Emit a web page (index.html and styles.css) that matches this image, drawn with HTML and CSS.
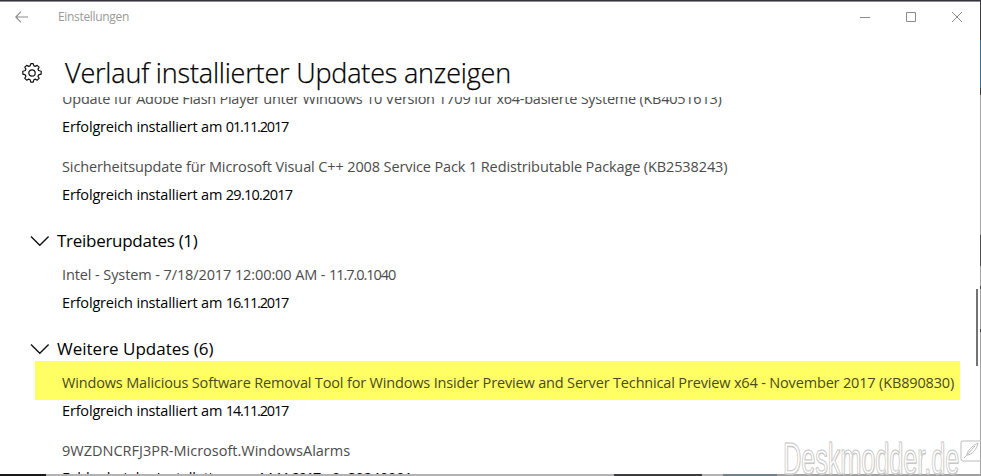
FILE: index.html
```
<!DOCTYPE html>
<html lang="de">
<head>
<meta charset="utf-8">
<title>Einstellungen</title>
<link rel="stylesheet" href="styles.css">
</head>
<body>
<div class="window">
  <header class="titlebar">
    <svg class="back" width="14" height="12" viewBox="0 0 14 12"><path d="M6 .7.8 6 6 11.3M1 6h12"/></svg>
    <span class="app-name">Einstellungen</span>
    <div class="controls">
      <svg width="12" height="12" viewBox="0 0 12 12"><path d="M1 6.5h10"/></svg>
      <svg width="12" height="12" viewBox="0 0 12 12"><path d="M1.5 1.5h9v9h-9z"/></svg>
      <svg width="12" height="12" viewBox="0 0 12 12"><path d="m1 1 10 10M11 1 1 11"/></svg>
    </div>
  </header>
  <div class="heading">
    <svg class="gear" width="20" height="20" viewBox="0 0 20 20"><path d="M8.1 2.9 8.8.7h2.4l.7 2.2 1.3.5 2-1 1.9 1.7-1.1 2 .6 1.4 2.6.8v2.9l-2.6.7-.6 1.4 1.1 2-1.9 1.9-2-1.1-1.3.6-.7 2.5H8.8l-.7-2.5-1.4-.6-2 1.1-1.9-1.9 1.1-2-.6-1.4-2.5-.7V8.3l2.5-.8.6-1.4-1.1-2 1.9-1.7 2 1z"/><circle cx="10" cy="10" r="3.2"/></svg>
    <h1>Verlauf installierter Updates anzeigen</h1>
  </div>
  <main class="history">
    <div class="item">
      <p class="name n-flash">Update für Adobe Flash Player unter Windows 10 Version 1709 für x64-basierte Systeme (KB4051613)</p>
      <p class="status">Erfolgreich installiert am <time>01.11.2017</time></p>
    </div>
    <div class="item">
      <p class="name n-vc">Sicherheitsupdate für Microsoft Visual C++ 2008 Service Pack 1 Redistributable Package (KB2538243)</p>
      <p class="status wide">Erfolgreich installiert am <time>29.10.2017</time></p>
    </div>
    <h2 class="tight"><svg width="20" height="12" viewBox="0 0 20 12"><path d="m1 1.5 8.8 8.7 8.8-8.7"/></svg>Treiberupdates (1)</h2>
    <div class="item">
      <p class="name n-intel">Intel - System - 7/18/2017 12:00:00 AM - <span class="version">11.7.0.1040</span></p>
      <p class="status">Erfolgreich installiert am <time>16.11.2017</time></p>
    </div>
    <h2><svg width="20" height="12" viewBox="0 0 20 12"><path d="m1 1.5 8.8 8.7 8.8-8.7"/></svg>Weitere Updates (6)</h2>
    <div class="item">
      <p class="name marked">Windows Malicious Software Removal Tool for Windows Insider Preview and Server Technical Preview x64 - November 2017 (KB890830)</p>
      <p class="status">Erfolgreich installiert am <time>14.11.2017</time></p>
    </div>
    <div class="item">
      <p class="name">9WZDNCRFJ3PR-Microsoft.WindowsAlarms</p>
      <p class="status failed">Fehler bei der Installation am <time>14.11.2017</time> - 0x80240001</p>
    </div>
  </main>
  <div class="scrollbar"></div>
  <div class="edge-right"></div>
  <div class="edge-bottom"></div>
  <div class="watermark"><span>Deskmodder.de</span>
    <svg width="21" height="22" viewBox="0 0 21 22"><rect x="1" y="1" width="22" height="20" rx="2"/><path d="M4 18 8 14M7 15c0-4 5-9 11-12-1 6-6 12-11 12zl8-9"/></svg>
  </div>
</div>
</body>
</html>
```
FILE: styles.css
```
* { box-sizing: border-box; margin: 0; padding: 0; }
body {
  font: 14.5px/28px "Open Sans", "Noto Sans", sans-serif;
  color: #000;
  background: #fff;
  overflow: hidden;
}
svg { fill: none; flex: none; }
.window {
  position: relative;
  width: 981px;
  height: 476px;
  border-top: 1px solid #34323b;
  box-shadow: inset 0 1px #8d8b91;
  display: flex;
  flex-direction: column;
  overflow: hidden;
  white-space: nowrap;
}
.titlebar {
  height: 32px;
  flex: none;
  display: flex;
  align-items: center;
  padding: 0 18px 0 15px;
  color: #999;
  font-size: 12px;
}
.back { stroke: #8c8c8c; stroke-width: 1.1; }
.app-name { margin-left: 29px; letter-spacing: -.32px; }
.controls { margin-left: auto; display: flex; gap: 34px; }
.controls svg { stroke: #8a8a8a; }
.heading {
  height: 64px;
  flex: none;
  display: flex;
  align-items: center;
  padding: 16px 0 0 22px;
}
.gear { stroke: #111; stroke-width: 1.2; stroke-linejoin: round; }
h1 {
  margin-left: 23px;
  font-size: 27px;
  font-weight: 300;
  letter-spacing: -.19px;
  -webkit-text-stroke: .25px #000;
}
.history {
  flex: 1;
  min-height: 0;
  overflow: hidden;
}
.item { padding-left: 62px; margin-bottom: 12px; }
.item:first-child { margin-top: -12px; }
.name { color: #4c4c4c; }
.n-flash { letter-spacing: -.25px; }
.n-vc { letter-spacing: -.118px; }
.n-intel { letter-spacing: -.1px; }
.version { letter-spacing: -1.05px; }
.status { letter-spacing: -.17px; }
.status time { letter-spacing: -1.15px; }
.status.wide time { letter-spacing: -.74px; }
.status.failed { margin-top: -1px; }
.marked {
  width: 925px;
  height: 39px;
  margin: -8px 0 -3px -27px;
  padding: 8px 0 0 27px;
  background: #ffff63;
  color: #4a4a1c;
  letter-spacing: -.163px;
}
h2 {
  height: 40px;
  display: flex;
  align-items: center;
  gap: 7px;
  padding-left: 30px;
  font-size: 17px;
  font-weight: 400;
}
h2 svg { stroke: #111; stroke-width: 1.4; }
.tight { letter-spacing: -.28px; }
.scrollbar {
  position: absolute;
  left: 976px;
  top: 288px;
  width: 2px;
  height: 77px;
  background: #737373;
}
.edge-right {
  position: absolute;
  right: 0;
  top: 0;
  width: 1px;
  height: 475px;
  background: linear-gradient(#3d3c42 39px, #3d6f8d 39px 87px, #3d3c42 87px 94px, #a3a3a3 94px 234px, #4b4b4b 234px 265px, #a3a3a3 265px 285px, #444 285px 288px, #a3a3a3 288px 328px, #444 328px 331px, #a3a3a3 331px);
}
.edge-bottom {
  position: absolute;
  left: 0;
  bottom: 0;
  width: 981px;
  height: 2px;
  background: linear-gradient(90deg, #18181d 46px, #b3b3b3 46px 614px, #3b3b40 614px 702px, #b3b3b3 702px 723px, #70818c 723px 777px, #a0a0a0 777px);
}
.watermark {
  position: absolute;
  left: 783px;
  top: 438px;
  width: 198px;
  height: 38px;
}
.watermark span {
  display: block;
  width: 310px;
  font: 44px/39px "Liberation Sans", sans-serif;
  color: #fff;
  -webkit-text-stroke: 1px #c4c4c4;
  text-shadow: 1px 1px 1px #ccc;
  transform: scaleX(.572);
  transform-origin: left;
}
.watermark svg {
  position: absolute;
  left: 177px;
  top: 1px;
  stroke: #bbb;
}
```
